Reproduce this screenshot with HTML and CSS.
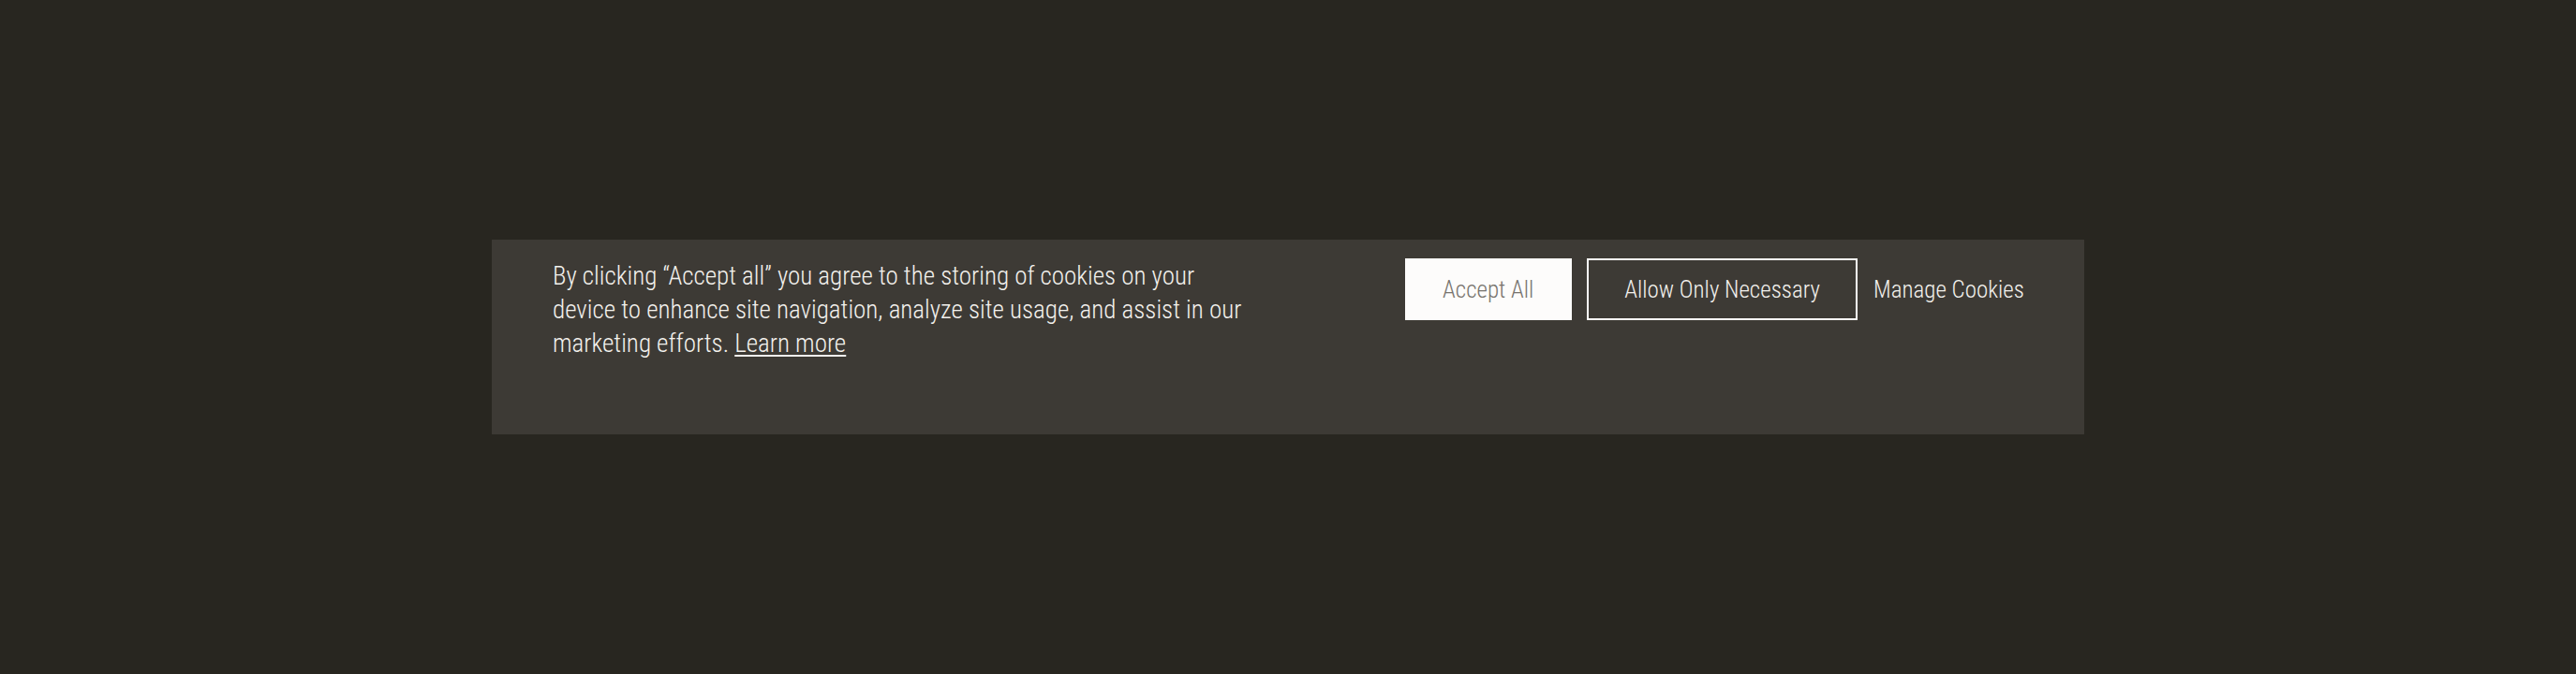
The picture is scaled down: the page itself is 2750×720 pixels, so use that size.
FILE: index.html
```html
<!DOCTYPE html>
<html lang="en">
<head>
  <meta charset="UTF-8">
  <title>Cookie Consent</title>
  <link rel="stylesheet" href="styles.css">
</head>
<body>
  <div class="banner">
    <p class="message">
      By clicking “Accept all” you agree to the storing of cookies on your device to enhance site navigation, analyze site usage, and assist in our marketing efforts. <a href="#" class="learn">Learn more</a>
    </p>
    <div class="actions">
      <button class="btn btn-accept">Accept All</button>
      <button class="btn btn-necessary">Allow Only Necessary</button>
      <button class="btn-manage">Manage Cookies</button>
    </div>
  </div>
</body>
</html>
```

FILE: styles.css
```css
html, body {
  height: 100%;
}
body {
  margin: 0;
  background: #282620;
  font-family: "Roboto Condensed", "Roboto", sans-serif;
  font-stretch: condensed;
  font-weight: 300;
  display: flex;
  align-items: center;
  justify-content: center;
}
.banner {
  width: 1700px;
  height: 208px;
  box-sizing: border-box;
  padding: 20px 64px 0 65px;
  background: #3d3a35;
  display: flex;
  justify-content: space-between;
  align-items: flex-start;
}
.message {
  margin: 0;
  padding-top: 1px;
  max-width: 745px;
  font-size: 27px;
  line-height: 36px;
  color: #f3f1ed;
}
.learn {
  color: #f3f1ed;
  text-decoration: underline;
  text-underline-offset: 3px;
  text-decoration-thickness: 2px;
}
.actions {
  display: flex;
  align-items: center;
  gap: 16px;
}
.btn {
  height: 66px;
  padding: 0 40px;
  font-family: inherit;
  font-stretch: inherit;
  font-weight: inherit;
  font-size: 25px;
  cursor: pointer;
  box-sizing: border-box;
}
.btn-accept {
  background: #fdfcfb;
  color: #77736d;
  border: none;
  padding: 0 41px 0 40px;
}
.btn-necessary {
  background: transparent;
  color: #f3f1ed;
  border: 2px solid #fdfcfb;
  padding: 0 38px;
}
.btn-manage {
  background: none;
  border: none;
  padding: 0;
  margin-left: 1px;
  font-family: inherit;
  font-stretch: inherit;
  font-weight: inherit;
  font-size: 25px;
  color: #f3f1ed;
  cursor: pointer;
}
```
